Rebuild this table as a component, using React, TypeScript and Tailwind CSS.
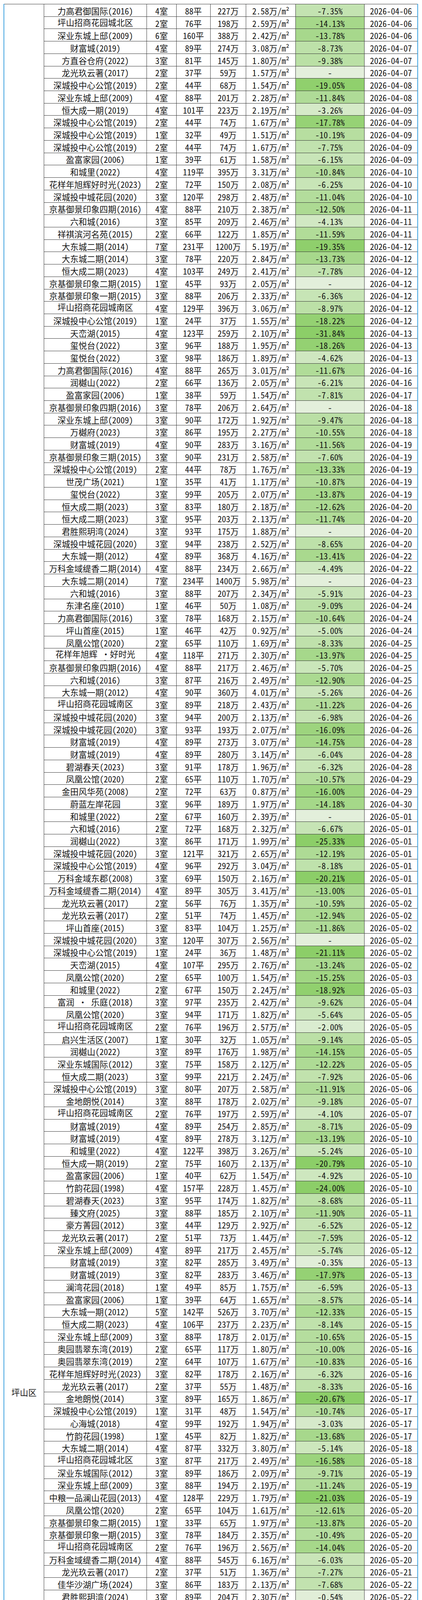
import { Fragment } from 'react';

const RAW = `力高君御国际(2016)|4|88|227|2.58|-7.35|04-06
坪山招商花园城北区(2020)|2|76|198|2.59|-14.13|04-06
深业东城上邸(2009)|6|160|388|2.42|-13.78|04-06
财富城(2019)|4|89|274|3.08|-8.73|04-07
方直谷仓府(2022)|3|81|145|1.80|-9.38|04-07
龙光玖云著(2017)|2|37|59|1.57|-|04-07
深城投中心公馆(2019)|2|44|68|1.54|-19.05|04-08
深业东城上邸(2009)|4|88|201|2.28|-11.84|04-08
恒大成一期(2019)|4|101|223|2.19|-3.26|04-09
深城投中心公馆(2019)|2|44|74|1.67|-17.78|04-09
深城投中心公馆(2019)|1|32|49|1.51|-10.19|04-09
深城投中心公馆(2019)|2|44|74|1.67|-7.75|04-09
盈富家园(2006)|1|39|61|1.58|-6.15|04-09
和城里(2022)|4|119|395|3.31|-10.84|04-10
花样年旭辉好时光(2023)|2|72|150|2.08|-6.25|04-10
深城投中城花园(2020)|3|120|298|2.48|-11.04|04-10
京基御景印象四期(2016)|4|88|210|2.38|-12.50|04-11
六和城(2016)|3|85|209|2.46|-4.13|04-11
祥祺滨河名苑(2015)|2|66|122|1.85|-11.59|04-11
大东城二期(2014)|7|231|1200|5.19|-19.35|04-12
大东城二期(2014)|3|78|220|2.84|-13.73|04-12
恒大成二期(2023)|4|103|249|2.41|-7.78|04-12
京基御景印象二期(2015)|1|45|93|2.05|-|04-12
京基御景印象一期(2015)|3|88|206|2.33|-6.36|04-12
坪山招商花园城南区(2020)|4|129|396|3.06|-8.97|04-12
深城投中心公馆(2019)|1|24|37|1.55|-18.22|04-12
天峦湖(2015)|4|123|259|2.10|-31.84|04-13
玺悦台(2022)|3|96|188|1.95|-18.26|04-13
玺悦台(2022)|3|98|186|1.89|-4.62|04-13
力高君御国际(2016)|4|88|265|3.01|-11.67|04-16
润樾山(2022)|2|66|136|2.05|-6.21|04-16
盈富家园(2006)|1|38|59|1.54|-7.81|04-17
京基御景印象四期(2016)|3|78|206|2.64|-|04-18
深业东城上邸(2009)|3|90|172|1.92|-9.47|04-18
万樾府(2023)|3|86|195|2.27|-10.55|04-18
财富城(2019)|4|90|283|3.16|-11.56|04-19
京基御景印象三期(2015)|3|90|231|2.58|-7.60|04-19
深城投中心公馆(2019)|2|44|78|1.76|-13.33|04-19
世茂广场(2021)|1|35|41|1.17|-10.87|04-19
玺悦台(2022)|3|99|205|2.07|-13.87|04-19
恒大成二期(2023)|3|83|180|2.18|-12.62|04-20
恒大成二期(2023)|3|95|203|2.13|-11.74|04-20
君胜熙玥湾(2024)|3|93|175|1.88|-|04-20
深城投中城花园(2020)|3|94|238|2.52|-8.65|04-20
大东城一期(2012)|4|89|368|4.16|-13.41|04-22
万科金域缇香二期(2014)|4|88|234|2.66|-4.49|04-22
大东城二期(2014)|7|234|1400|5.98|-|04-23
六和城(2016)|3|88|207|2.34|-5.91|04-23
东津名座(2010)|1|46|50|1.08|-9.09|04-24
力高君御国际(2016)|3|78|168|2.15|-10.64|04-24
坪山首座(2015)|1|46|42|0.92|-5.00|04-24
凤凰公馆(2020)|2|65|110|1.69|-8.33|04-25
花样年旭辉 ·好时光(2023)|4|118|271|2.30|-13.97|04-25
京基御景印象四期(2016)|4|88|217|2.46|-5.70|04-25
六和城(2016)|3|87|216|2.49|-12.90|04-25
大东城一期(2012)|4|90|360|4.01|-5.26|04-26
坪山招商花园城南区(2020)|3|89|218|2.43|-11.22|04-26
深城投中城花园(2020)|3|94|200|2.13|-6.98|04-26
深城投中城花园(2020)|3|93|193|2.07|-16.09|04-26
财富城(2019)|4|89|273|3.07|-14.75|04-28
财富城(2019)|4|89|280|3.14|-6.04|04-28
碧湖春天(2023)|3|91|178|1.96|-6.32|04-28
凤凰公馆(2020)|2|65|110|1.70|-10.57|04-29
金田风华苑(2008)|2|72|63|0.87|-16.00|04-29
蔚蓝左岸花园|3|96|189|1.97|-14.18|04-30
和城里(2022)|2|67|160|2.39|-|05-01
六和城(2016)|2|72|168|2.32|-6.67|05-01
润樾山(2022)|3|86|171|1.99|-25.33|05-01
深城投中城花园(2020)|3|121|321|2.65|-12.19|05-01
深城投中心公馆(2019)|4|96|292|3.04|-8.18|05-01
万科金域东郡(2008)|3|69|150|2.16|-20.21|05-01
万科金域缇香二期(2014)|4|89|305|3.41|-13.00|05-01
龙光玖云著(2017)|2|56|76|1.35|-10.59|05-02
龙光玖云著(2017)|2|51|74|1.45|-12.94|05-02
坪山首座(2015)|3|83|104|1.25|-11.86|05-02
深城投中城花园(2020)|3|120|307|2.56|-|05-02
深城投中心公馆(2019)|1|24|36|1.48|-21.11|05-02
天峦湖(2015)|4|107|295|2.76|-13.24|05-02
凤凰公馆(2020)|2|65|100|1.54|-15.25|05-03
和城里(2022)|2|67|150|2.24|-18.92|05-03
富润 · 乐庭(2018)|3|97|235|2.42|-9.62|05-04
凤凰公馆(2020)|3|94|171|1.82|-5.64|05-05
坪山招商花园城南区(2020)|2|76|196|2.57|-2.00|05-05
启兴生活区(2007)|1|30|32|1.05|-9.14|05-05
润樾山(2022)|3|89|176|1.98|-14.15|05-05
深业东城国际(2012)|3|75|158|2.12|-12.22|05-05
恒大成二期(2023)|3|99|221|2.24|-7.92|05-06
深城投中心公馆(2019)|3|80|207|2.58|-11.91|05-06
金地朗悦(2014)|3|88|178|2.02|-9.18|05-07
坪山招商花园城南区(2020)|2|76|197|2.59|-4.10|05-07
财富城(2019)|4|89|254|2.85|-8.71|05-09
财富城(2019)|4|89|278|3.12|-13.19|05-10
和城里(2022)|4|122|398|3.26|-5.24|05-10
恒大成一期(2019)|2|75|160|2.13|-20.79|05-10
盈富家园(2006)|1|40|62|1.54|-4.92|05-10
竹韵花园(1998)|4|157|228|1.45|-24.00|05-10
碧湖春天(2023)|3|95|174|1.82|-8.68|05-11
臻文府(2025)|3|88|185|2.10|-11.90|05-11
豪方菁园(2012)|3|44|129|2.92|-6.52|05-12
龙光玖云著(2017)|2|51|73|1.44|-7.59|05-12
深业东城上邸(2009)|4|89|217|2.45|-5.74|05-12
财富城(2019)|3|82|285|3.49|-0.35|05-13
财富城(2019)|3|82|283|3.46|-17.97|05-13
澜湾花园(2018)|1|49|85|1.75|-6.59|05-13
盈富家园(2006)|1|39|64|1.65|-8.57|05-14
大东城一期(2012)|5|142|526|3.70|-12.33|05-15
恒大成二期(2023)|4|106|237|2.23|-8.14|05-15
深业东城上邸(2009)|3|88|178|2.01|-10.65|05-15
奥园翡翠东湾(2019)|2|65|117|1.80|-10.00|05-16
奥园翡翠东湾(2019)|2|64|107|1.67|-10.83|05-16
花样年旭辉好时光(2023)|3|82|178|2.16|-6.32|05-16
龙光玖云著(2017)|2|37|55|1.48|-8.33|05-16
金地朗悦(2014)|3|89|165|1.86|-20.67|05-17
深城投中心公馆(2019)|1|31|48|1.54|-10.74|05-17
心海城(2018)|4|99|192|1.94|-3.03|05-17
竹韵花园(1998)|1|45|82|1.82|-13.68|05-17
大东城二期(2014)|4|87|332|3.80|-5.14|05-18
坪山招商花园城北区(2020)|3|87|217|2.49|-16.58|05-18
深业东城国际(2012)|3|89|186|2.09|-9.71|05-19
深业东城上邸(2009)|3|88|194|2.19|-11.24|05-19
中粮一品澜山花园(2013)|4|128|229|1.79|-21.03|05-19
凤凰公馆(2020)|2|65|104|1.61|-12.61|05-20
京基御景印象二期(2015)|1|33|65|1.97|-13.87|05-20
京基御景印象一期(2015)|3|78|184|2.35|-10.49|05-20
坪山招商花园城南区(2020)|2|76|196|2.56|-14.04|05-20
万科金域缇香二期(2014)|4|88|545|6.16|-6.03|05-20
龙光玖云著(2017)|2|37|51|1.36|-7.27|05-21
佳华沙湖广场(2024)|3|86|183|2.13|-7.68|05-22
君胜熙玥湾(2024)|3|89|204|2.30|-0.54|05-22
深业东城国际(2012)|3|89|185|2.08|-10.00|05-22
丹梓龙庭(2014)|3|89|120|1.35|-45.45|05-23
丹梓龙庭(2014)|2|69|85|1.23|-5.56|05-23
深城投中城花园(2020)|3|94|222|2.35|-10.48|05-23
深城投中心公馆(2019)|1|32|48|1.52|-8.68|05-23
深业东城上邸(2009)|5|87|196|2.26|-21.01|05-23
奥园翡翠东湾(2019)|2|65|113|1.74|-13.08|05-24
奥园翡翠东湾(2019)|3|81|149|1.85|-16.29|05-24
东方威尼斯花园(2003)|2|84|138|1.65|-4.69|05-24
万科金域东郡(2008)|2|70|142|2.02|-5.33|05-24
万科金域缇香二期(2014)|3|76|208|2.75|-8.77|05-24
竹韵花园(1998)|4|184|308|1.67|-18.95|05-24
大东城一期(2012)|4|149|520|3.50|-13.19|05-25
龙光玖云著(2017)|2|54|60|1.11|-7.69|05-25
奥园翡翠东湾(2019)|3|89|163|1.83|-6.86|05-26
龙光玖云著(2017)|2|37|57|1.52|-2.56|05-26
深城投中心公馆(2019)|1|32|49|1.52|-10.91|05-26
臻文府(2025)|2|77|145|1.88|-13.17|05-26
财富城(2019)|4|89|268|3.00|-8.22|05-27
碧湖春天(2023)|4|111|218|1.96|-3.11|05-28
深城投中城花园(2020)|3|92|211|2.30|-7.46|05-28
万科金域东郡(2008)|3|70|150|2.13|-3.35|05-28
财富城(2019)|3|82|260|3.17|-1.89|05-29
大东城二期(2014)|3|84|378|4.48|-2.83|05-29
京基御景印象二期(2015)|2|79|160|2.02|-5.88|05-29
六和城(2016)|3|168|412|2.46|-23.70|05-29
臻文府(2025)|2|77|140|1.81|-5.41|05-29
东方威尼斯花园(2003)|3|110|180|1.63|-8.63|05-30
凤凰公馆(2020)|2|65|112|1.73|-5.88|05-30
泰富华悦都会(2020)|3|85|164|1.92|-8.89|05-30
盈富家园(2006)|1|39|64|1.66|-8.57|05-30
恒大成一期(2019)|4|104|243|2.35|-6.18|06-01
深业东城国际(2012)|3|89|192|2.15|-8.57|06-02
心海城(2018)|4|103|180|1.75|-12.20|06-02
大东城二期(2014)|3|121|568|4.70|-13.94|06-03
和城里(2022)|2|67|144|2.15|-8.99|06-03
恒大成二期(2023)|4|106|238|2.24|-8.11|06-03
臻文府(2025)|3|87|172|1.97|-9.47|06-03
恒大成二期(2023)|4|106|249|2.34|-7.43|06-04
京基御景印象三期(2015)|3|89|220|2.48|-8.54|06-05
龙光玖云著(2017)|1|43|54|1.24|-8.47|06-05
凤凰公馆(2020)|3|94|166|1.77|-7.26|06-06
祥祺滨河名苑(2015)|5|136|320|2.35|-|06-06
盈富家园(2006)|1|39|60|1.55|-9.01|06-06
丹梓龙庭(2014)|4|142|183|1.29|-8.50|06-07
六和城(2016)|3|88|206|2.33|-7.62|06-07
深业御园(2012)|1|41|65|1.61|-21.45|06-07
中粮一品澜山花园(2013)|4|126|213|1.69|-16.80|06-07
万樾府(2023)|3|86|205|2.39|-10.87|06-08
坪山招商花园城北区(2020)|3|89|242|2.71|-13.75|06-09
深业东城上邸(2009)|3|89|147|1.66|-18.33|06-09
臻文府(2025)|2|75|146|1.95|-11.52|06-10
豪方东园(2020)|3|79|161|2.04|-10.67|06-11
润樾山(2022)|3|89|179|2.00|-3.24|06-12
深城投中心公馆(2019)|2|45|75|1.66|-25.20|06-12
天峦湖(2015)|6|111|658|5.92|-13.42|06-12
蔚蓝左岸花园|3|96|187|1.94|-0.53|06-12
财富城(2019)|3|82|203|2.48|-13.83|06-13
臻文府(2025)|3|95|190|2.00|-7.56|06-13
奥园翡翠东湾(2019)|4|126|315|2.49|-7.35|06-14
东关珺府(2021)|4|109|212|1.95|-9.01|06-14
凤凰公馆(2020)|4|119|196|1.65|-11.14|06-14
龙光玖云著(2017)|2|38|54|1.42|-7.76|06-14
深业东城国际(2012)|3|82|160|1.96|-13.51|06-14
万科金域东郡(2008)|2|64|138|2.17|-10.97|06-15
凤凰公馆(2020)|2|65|92|1.42|-14.81|06-16
深城投中心公馆(2019)|1|32|50|1.53|-38.13|06-19
坪山招商花园城南区(2020)|4|130|401|3.08|-4.62|06-19
大东城一期(2012)|4|88|336|3.80|-4.00|06-20
京基御景印象二期(2015)|3|129|354|2.74|-15.31|06-20
坪山招商花园城南区(2020)|3|89|261|2.94|-6.64|06-21
深城投中心公馆(2019)|2|44|75|1.68|-17.22|06-21
万科金域缇香(2013)|2|75|176|2.36|-2.50|06-21
恒大成二期(2023)|4|106|245|2.31|-14.93|06-22
京基御景印象四期(2016)|3|88|233|2.64|-9.69|06-22
京基御景印象一期(2015)|4|89|255|2.86|-5.56|06-22
深城投中心公馆(2019)|1|33|48|1.46|-7.69|06-23
万樾府(2023)|3|86|199|2.32|-4.33|06-23
中海万锦熙岸华庭(2022)|3|89|211|2.38|-8.48|06-23
豪方菁园(2012)|3|48|123|2.55|-9.04|06-25
大东城一期(2012)|7|263|1330|5.06|-33.50|06-25
深业御园(2012)|1|41|52|1.27|-20.00|06-26
凤凰公馆(2020)|2|65|108|1.66|-10.17|06-27
天峦湖二期(2019)|3|87|205|2.35|-10.09|06-27
碧湖春天(2023)|3|95|180|1.89|-|06-28
凤凰公馆(2020)|2|65|102|1.57|-13.56|06-28
京基御景印象二期(2015)|2|77|175|2.26|-5.41|06-28
京基御景印象四期(2016)|4|89|261|2.93|-5.09|06-28
六和城(2016)|3|110|110|1.00|-29.03|06-28
龙光玖云著(2017)|2|52|73|1.41|-6.41|06-28
深城投中城花园(2020)|4|125|325|2.60|-14.47|06-28
深城投中心公馆(2019)|3|86|253|2.94|-2.88|06-28
天峦湖(2015)|4|155|430|2.77|-4.44|06-28
万科金域缇香(2013)|4|89|281|3.14|-5.77|06-28
奥园翡翠东湾(2019)|3|81|157|1.94|-6.73|06-28`;

type Row = { name: string; rooms: string; area: string; total: string; unit: string; pct: string; date: string };

const rows: Row[] = RAW.trim().split('\n').map(line => {
  const [name, rooms, area, total, unit, pct, date] = line.split('|');
  return { name, rooms, area, total, unit, pct, date };
});

// green scale for the drop column, capped at -20%
function pctColor(pct: string) {
  const t = pct === '-' ? 0 : Math.min(Math.abs(parseFloat(pct)), 20) / 20;
  const from = [227, 239, 219];
  const to = [140, 206, 104];
  const c = from.map((f, i) => Math.round(f + (to[i] - f) * t));
  return `rgb(${c.join(',')})`;
}

const isLong = (name: string) => name.startsWith('坪山招商') || name.includes('·好时光');

export default function App() {
  const last = rows.length - 1;

  return (
    <div className="bg-white pt-[10px] pl-[9px] font-['Noto_Sans_Mono_CJK_SC','Noto_Sans_CJK_SC',sans-serif] text-[21.5px] text-[#151515]">
      <div className="w-[1061px] border-x-2 border-b-2 border-[#3fa3e0]">
        <div className="grid grid-cols-[102px_263px_76px_87px_91px_127px_176px_135px] auto-rows-[31.73px] border-t border-[#3a3a3a]">
          <div className="row-span-224 flex items-center justify-center border-r border-[#3a3a3a] leading-[24px]">坪山区</div>
          {rows.map((r, i) => {
            const cell = i === last
              ? 'flex items-center justify-center overflow-hidden whitespace-nowrap border-r border-[#3a3a3a] pt-[3px] leading-[22px]'
              : 'flex items-center justify-center overflow-hidden whitespace-nowrap border-r border-b border-[#3a3a3a] pt-[3px] leading-[22px]';
            return (
              <Fragment key={i}>
                {isLong(r.name) ? (
                  <div className={i === last ? 'overflow-hidden border-r border-[#3a3a3a] px-[8px] pt-[2px] text-center leading-[24px]' : 'overflow-hidden border-r border-b border-[#3a3a3a] px-[8px] pt-[2px] text-center leading-[24px]'}>
                    {r.name}
                  </div>
                ) : (
                  <div className={cell}>{r.name}</div>
                )}
                <div className={cell}>{r.rooms}室</div>
                <div className={cell}>{r.area}平</div>
                <div className={cell}>{r.total}万</div>
                <div className={cell}>{r.unit}万/m²</div>
                <div className={cell} style={{ backgroundColor: pctColor(r.pct) }}>
                  {r.pct === '-' ? '-' : `${r.pct}%`}
                </div>
                <div className={i === last ? 'flex items-center justify-center whitespace-nowrap pt-[3px] leading-[22px]' : 'flex items-center justify-center whitespace-nowrap border-b border-[#3a3a3a] pt-[3px] leading-[22px]'}>
                  2026-{r.date}
                </div>
              </Fragment>
            );
          })}
        </div>
      </div>
    </div>
  );
}
